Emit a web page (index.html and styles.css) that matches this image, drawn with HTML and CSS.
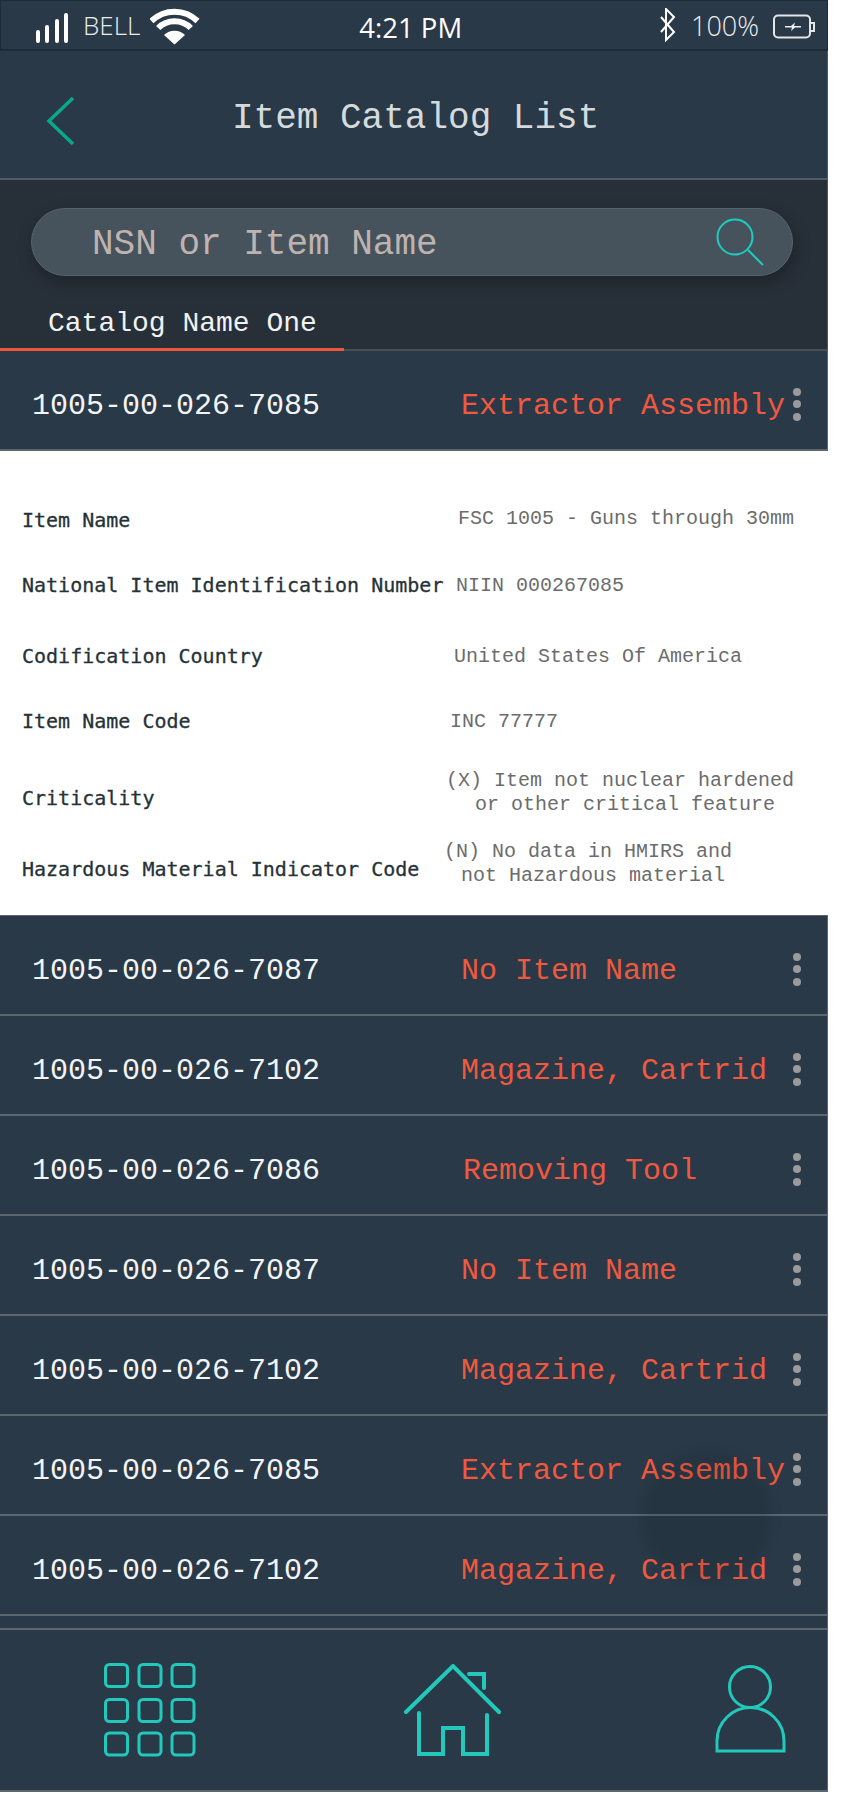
FILE: index.html
```html
<!doctype html>
<html>
<head>
	<meta charset="utf-8"/>
	<title>Item Catalog List</title>
	<link rel="stylesheet" href="styles.css">
</head>
<body>
	<div id="wrapper">
		<div class="status">
			<svg class="signal" width="32" height="32" viewBox="36 12 32 32">
				<rect x="36" y="30" width="4" height="13" rx="2"/>
				<rect x="45" y="25" width="4" height="18" rx="2"/>
				<rect x="55" y="19" width="4" height="24" rx="2"/>
				<rect x="64" y="13" width="4" height="30" rx="2"/>
			</svg>
			<span class="carrier">BELL</span>
			<svg class="wifi" width="50" height="38" viewBox="149 6 50 38">
				<path class="wifi-arc" d="M150.5 20 A33 33 0 0 1 196.5 20"/>
				<path class="wifi-arc" d="M157.2 27 A23 23 0 0 1 189.8 27"/>
				<path class="wifi-dot" d="M173.5 43.5 L163 34 A15 15 0 0 1 184 34 Z"/>
			</svg>
			<span class="clock">4:21 PM</span>
			<svg class="bt" width="18" height="34" viewBox="660 9 18 34">
				<path d="M663 18 L676 33 L668 41 V10 L676 18 L663 33"/>
			</svg>
			<span class="battery-pct">100%</span>
			<svg class="battery" width="42" height="26" viewBox="773 13 42 26">
				<rect x="774" y="14.5" width="36" height="22" rx="4"/>
				<path class="nub" d="M811 22 H814 V30 H811"/>
				<path class="bolt" d="M785 25 H791 L795 21.5 L794 25 H801 V26.5 H795 L791 30 L792 26.5 H785 Z"/>
			</svg>
		</div>

		<div class="header">
			<svg class="back" width="30" height="52" viewBox="46 96 30 52">
				<path d="M73 99 L49 122 L73 145"/>
			</svg>
			<h1>Item Catalog List</h1>
		</div>

		<div class="finder">
			<div class="search">
				<span class="search-hint">NSN or Item Name</span>
				<svg class="search-icon" width="50" height="50" viewBox="716 214 50 50">
					<circle cx="735" cy="233" r="17.5"/>
					<path d="M748 246 L763 261"/>
				</svg>
			</div>
			<div class="tabs">
				<div class="tab">Catalog Name One</div>
			</div>
		</div>

		<div class="row">
			<span class="nsn">1005-00-026-7085</span>
			<span class="name">Extractor Assembly</span>
			<span class="dots"><i></i><i></i><i></i></span>
		</div>

		<div class="details">
			<div class="detail detail-name">
				<span class="label">Item Name</span>
				<span class="value">FSC 1005 - Guns through 30mm</span>
			</div>
			<div class="detail detail-niin">
				<span class="label">National Item Identification Number</span>
				<span class="value">NIIN 000267085</span>
			</div>
			<div class="detail detail-country">
				<span class="label">Codification Country</span>
				<span class="value">United States Of America</span>
			</div>
			<div class="detail detail-code">
				<span class="label">Item Name Code</span>
				<span class="value">INC 77777</span>
			</div>
			<div class="detail detail-crit">
				<span class="label">Criticality</span>
				<span class="value">(X) Item not nuclear hardened<br/><span class="second-line">or other critical feature</span></span>
			</div>
			<div class="detail detail-haz">
				<span class="label">Hazardous Material Indicator Code</span>
				<span class="value">(N) No data in HMIRS and<br/><span class="second-line">not Hazardous material</span></span>
			</div>
		</div>

		<div class="list">
			<div class="row">
				<span class="nsn">1005-00-026-7087</span>
				<span class="name">No Item Name</span>
				<span class="dots"><i></i><i></i><i></i></span>
			</div>
			<div class="row">
				<span class="nsn">1005-00-026-7102</span>
				<span class="name">Magazine, Cartrid</span>
				<span class="dots"><i></i><i></i><i></i></span>
			</div>
			<div class="row">
				<span class="nsn">1005-00-026-7086</span>
				<span class="name name-tool">Removing Tool</span>
				<span class="dots"><i></i><i></i><i></i></span>
			</div>
			<div class="row">
				<span class="nsn">1005-00-026-7087</span>
				<span class="name">No Item Name</span>
				<span class="dots"><i></i><i></i><i></i></span>
			</div>
			<div class="row">
				<span class="nsn">1005-00-026-7102</span>
				<span class="name">Magazine, Cartrid</span>
				<span class="dots"><i></i><i></i><i></i></span>
			</div>
			<div class="row">
				<span class="nsn">1005-00-026-7085</span>
				<span class="name">Extractor Assembly</span>
				<span class="dots"><i></i><i></i><i></i></span>
			</div>
			<div class="row">
				<span class="nsn">1005-00-026-7102</span>
				<span class="name">Magazine, Cartrid</span>
				<span class="dots"><i></i><i></i><i></i></span>
			</div>
			<div class="list-tail"></div>
			<div class="fab-shadow"></div>
		</div>

		<div class="nav">
			<svg class="nav-grid" width="94" height="96" viewBox="103 1661 94 96">
				<rect x="105.5" y="1663.5" width="22" height="22" rx="4"/>
				<rect x="139" y="1663.5" width="22" height="22" rx="4"/>
				<rect x="172" y="1663.5" width="22" height="22" rx="4"/>
				<rect x="105.5" y="1698.5" width="22" height="22" rx="4"/>
				<rect x="139" y="1698.5" width="22" height="22" rx="4"/>
				<rect x="172" y="1698.5" width="22" height="22" rx="4"/>
				<rect x="105.5" y="1732" width="22" height="22" rx="4"/>
				<rect x="139" y="1732" width="22" height="22" rx="4"/>
				<rect x="172" y="1732" width="22" height="22" rx="4"/>
			</svg>
			<svg class="nav-home" width="100" height="94" viewBox="403 1664 100 94">
				<path d="M406 1712 L453 1666 L499 1712"/>
				<path d="M469 1674 H484 V1688"/>
				<path d="M419 1713 V1754 H443 V1728 H463 V1754 H487 V1715"/>
			</svg>
			<svg class="nav-user" width="72" height="88" viewBox="714 1665 72 88">
				<circle cx="750" cy="1687" r="20.5"/>
				<path d="M717 1751 V1741 A33.5 33.5 0 0 1 784 1741 V1751 Z"/>
			</svg>
		</div>
	</div>
</body>
</html>
```

FILE: styles.css
```css
body {
    margin: 0;
    background: #ffffff;
    font-family: "Liberation Mono", "DejaVu Sans Mono", monospace;
}
#wrapper {
    width: 828px;
    padding-bottom: 19px;
}
h1 {
    margin: 0;
    font-size: 36px;
    font-weight: 400;
    color: #d5dadd;
}

/* status bar */
.status {
    display: flex;
    align-items: center;
    box-sizing: border-box;
    height: 51px;
    padding: 0 12px 0 36px;
    background: #293947;
    border: 1px solid #1f2b36;
    border-width: 1px 1px 2px 1px;
    font-family: "Open Sans", sans-serif;
    color: #e9ecee;
}
.signal, .wifi {
    fill: #ffffff;
    flex: none;
}
.signal {
    margin: 6px 0 0 -1px;
}
.carrier {
    margin-left: 15px;
    font-size: 26px;
    font-weight: 300;
}
.wifi {
    margin: 2px 0 0 10px;
}
.wifi-arc {
    fill: none;
    stroke: #ffffff;
    stroke-width: 6;
}
.clock {
    margin-left: 159px;
    font-size: 27.5px;
    color: #ffffff;
    padding-top: 4px;
}
.bt {
    margin-left: auto;
    fill: none;
    stroke: #ffffff;
    stroke-width: 2;
    flex: none;
}
.battery-pct {
    margin-left: 15px;
    font-size: 27px;
    font-weight: 300;
}
.battery {
    margin: 4px 0 0 14px;
    fill: none;
    stroke: #e3e6e8;
    stroke-width: 2;
    flex: none;
}
.battery .bolt {
    fill: #f0f2f3;
    stroke: none;
}

/* header */
.header {
    display: flex;
    align-items: center;
    box-sizing: border-box;
    height: 129px;
    padding: 0 0 0 46px;
    background: #293947;
    border-bottom: 2px solid #4e5a65;
    border-right: 1px solid #4e5a65;
}
.back {
    fill: none;
    stroke: #08a98a;
    stroke-width: 3.5;
    flex: none;
    margin-top: 12px;
}
.header h1 {
    margin: 8px 0 0 156px;
}

/* search */
.finder {
    background: #272f38;
    padding-top: 28px;
    border-right: 1px solid #4e5a65;
}
.search {
    display: flex;
    align-items: center;
    justify-content: space-between;
    box-sizing: border-box;
    width: 762px;
    height: 68px;
    margin-left: 31px;
    padding: 0 26px 0 60px;
    background: #46535d;
    border: 1px solid #57626c;
    border-radius: 34px;
    box-shadow: 2px 6px 16px rgba(0, 0, 0, 0.25);
}
.search-hint {
    padding-top: 5px;
    font-size: 36px;
    color: #bfb3b0;
}
.search-icon {
    fill: none;
    stroke: #1fcdc0;
    stroke-width: 2;
    flex: none;
    margin-top: 1px;
}
.tabs {
    margin-top: 27px;
    border-bottom: 2px solid #454f58;
}
.tab {
    box-sizing: border-box;
    width: 344px;
    height: 48px;
    margin-bottom: -2px;
    padding-left: 48px;
    border-bottom: 3px solid #ef553b;
    font-size: 28px;
    line-height: 42px;
    color: #f0f2f3;
}

/* rows */
.row {
    display: grid;
    grid-template-columns: 429px 332px auto;
    align-items: center;
    box-sizing: border-box;
    height: 100px;
    padding: 5px 0 0 32px;
    background: #293947;
    border-bottom: 2px solid #5c666f;
    border-right: 1px solid #5c666f;
}
.nsn, .name {
    padding-top: 6px;
    font-size: 30px;
}
.nsn {
    color: #f2f4f5;
}
.name {
    color: #f0583f;
}
.name-tool {
    margin-left: 2px;
}
.dots {
    display: flex;
    flex-direction: column;
    gap: 4.5px;
    margin-top: 3px;
}
.dots i {
    width: 8px;
    height: 8px;
    border-radius: 50%;
    background: #9a9a9a;
}

/* details */
.details {
    box-sizing: border-box;
    height: 464px;
    padding-top: 40px;
    background: #ffffff;
}
.detail {
    display: flex;
    align-items: center;
    padding-left: 22px;
}
.label {
    flex: none;
    width: 422px;
    margin-bottom: 2px;
    font-family: "DejaVu Sans Mono", monospace;
    font-size: 20px;
    color: #263238;
    -webkit-text-stroke: 0.3px #263238;
}
.value {
    font-size: 20px;
    line-height: 24px;
    text-align: center;
    color: #6c6c6c;
}
.second-line {
    display: inline-block;
    padding-left: 10px;
}
.detail-name { height: 60px; }
.detail-niin { height: 70px; }
.detail-country { height: 72px; }
.detail-code { height: 58px; }
.detail-crit { height: 90px; }
.detail-haz { height: 52px; }
.detail-name .value { margin: -4px 0 0 14px; }
.detail-niin .value { margin-left: 12px; }
.detail-country .value { margin-left: 10px; }
.detail-code .value { margin-left: 6px; }
.detail-crit .value { margin: -6px 0 0 2px; }
.detail-haz .value { margin: -6px 0 0 0; }
.detail-name .label { margin-top: 0; }
.detail-crit .label, .detail-haz .label { margin-top: 6px; }

/* list */
.list {
    position: relative;
    border-top: 1px solid #5c666f;
}
.list-tail {
    height: 12px;
    background: #293947;
    border-right: 1px solid #5c666f;
}
.fab-shadow {
    position: absolute;
    left: 642px;
    top: 536px;
    width: 130px;
    height: 130px;
    border-radius: 50%;
    background: rgba(0, 0, 0, 0.08);
    filter: blur(6px);
}

/* bottom nav */
.nav {
    display: flex;
    align-items: flex-start;
    box-sizing: border-box;
    height: 164px;
    padding: 32px 0 0 103px;
    background: #293947;
    border-top: 2px solid #5c666f;
    border-bottom: 2px solid #5c666f;
    border-right: 1px solid #5c666f;
}
.nav svg {
    fill: none;
    stroke: #22c9bb;
    flex: none;
}
.nav-grid {
    stroke-width: 3;
}
.nav-home {
    stroke-width: 4;
    stroke-linecap: round;
    margin: 2px 0 0 206px;
}
.nav-user {
    stroke-width: 3;
    margin: 3px 0 0 211px;
}
```
